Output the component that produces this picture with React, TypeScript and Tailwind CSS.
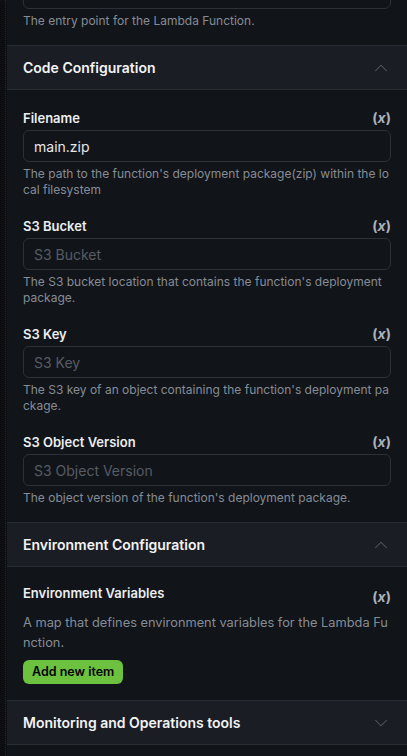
import { ChevronUp, ChevronDown } from "lucide-react";

type FieldProps = {
    label: string;
    value?: string;
    placeholder?: string;
    help: string;
};

function VarBadge({ className = "" }: { className?: string }) {
    return (
        <span className={`text-[14px] font-bold text-[#a9b1bd] ${className}`}>
            (<span className="italic">x</span>)
        </span>
    );
}

function Field({ label, value, placeholder, help }: FieldProps) {
    return (
        <div className="flex flex-col">
            <div className="flex items-end justify-between h-5">
                <span className="text-[13px] leading-4 font-semibold text-[#eceef1]">{label}</span>
                <VarBadge className="leading-4" />
            </div>
            <div className="mt-1 h-[32px] rounded-md border border-[#2c3038] px-[10px] flex items-center">
                {value ? (
                    <span className="text-[14px] text-[#e6e8eb]">{value}</span>
                ) : (
                    <span className="text-[14px] text-[#565c66]">{placeholder}</span>
                )}
            </div>
            <p className="mt-1 text-[12px] leading-4 text-[#858c97] break-all">{help}</p>
        </div>
    );
}

function SectionHeader({ title, open }: { title: string; open: boolean }) {
    return (
        <div className="h-[45px] shrink-0 bg-[#1a1d23] border-y border-[#272b32] flex items-center justify-between pl-4 pr-[15px]">
            <span className="text-[14px] font-semibold text-[#f2f3f5]">{title}</span>
            {open ? (
                <ChevronUp className="w-[22px] h-[22px] text-[#555b65]" strokeWidth={1.1} />
            ) : (
                <ChevronDown className="w-[22px] h-[22px] text-[#555b65]" strokeWidth={1.1} />
            )}
        </div>
    );
}

export default function App() {
    return (
        <div className="w-[407px] h-[756px] overflow-hidden flex bg-[#111418]" style={{ fontFamily: "Inter, 'Noto Sans', sans-serif" }}>
            <div className="w-[7px] shrink-0 bg-[#0c0e11] flex justify-end pr-[1px]">
                <div className="w-px h-full border-l border-dotted border-[#24272c]" />
            </div>
            <div className="flex-1 flex flex-col">
                {/* tail of previous field */}
                <div className="px-4 pb-4">
                    <div className="-mt-[23px] h-[32px] rounded-md border border-[#2c3038]" />
                    <p className="mt-1 text-[12px] leading-4 text-[#858c97]">The entry point for the Lambda Function.</p>
                </div>

                <SectionHeader title="Code Configuration" open />
                <div className="px-4 py-4 flex flex-col gap-4">
                    <Field
                        label="Filename"
                        value="main.zip"
                        help="The path to the function's deployment package(zip) within the local filesystem"
                    />
                    <Field
                        label="S3 Bucket"
                        placeholder="S3 Bucket"
                        help="The S3 bucket location that contains the function's deployment package."
                    />
                    <Field
                        label="S3 Key"
                        placeholder="S3 Key"
                        help="The S3 key of an object containing the function's deployment package."
                    />
                    <Field
                        label="S3 Object Version"
                        placeholder="S3 Object Version"
                        help="The object version of the function's deployment package."
                    />
                </div>

                <SectionHeader title="Environment Configuration" open />
                <div className="px-4 pt-4 pb-4 flex flex-col items-start">
                    <div className="w-full h-5 flex items-start justify-between">
                        <span className="text-[13px] font-semibold text-[#eceef1] leading-5">Environment Variables</span>
                        <VarBadge className="mt-1 leading-5" />
                    </div>
                    <p className="mt-[10px] text-[12.8px] leading-5 text-[#858c97] break-all">
                        A map that defines environment variables for the Lambda Function.
                    </p>
                    <button className="mt-[7px] h-6 px-[9px] rounded-md bg-[#6cc13f] text-[12.5px] leading-none font-semibold text-black">
                        Add new item
                    </button>
                </div>

                <SectionHeader title="Monitoring and Operations tools" open={false} />
            </div>
        </div>
    );
}
